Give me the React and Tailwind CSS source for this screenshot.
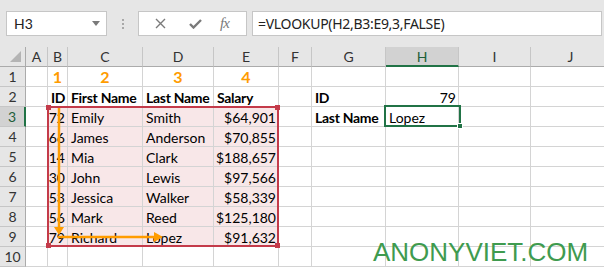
const cols = [
  { k: "A", w: "w-[22px]" },
  { k: "B", w: "w-[20px]" },
  { k: "C", w: "w-[75px]" },
  { k: "D", w: "w-[71px]" },
  { k: "E", w: "w-[65px]" },
  { k: "F", w: "w-[33px]" },
  { k: "G", w: "w-[74px]" },
  { k: "H", w: "w-[73px]" },
  { k: "I", w: "w-[72px]" },
  { k: "J", w: "w-[80px]" },
];

const people = [
  ["72", "Emily", "Smith", "$64,901"],
  ["66", "James", "Anderson", "$70,855"],
  ["14", "Mia", "Clark", "$188,657"],
  ["30", "John", "Lewis", "$97,566"],
  ["53", "Jessica", "Walker", "$58,339"],
  ["56", "Mark", "Reed", "$125,180"],
  ["79", "Richard", "Lopez", "$91,632"],
];

// cell content per row: { colKey: { v, bold, align, orange } }
const buildRows = () => {
  const rows = [];
  rows.push({
    B: { v: "1", orange: true },
    C: { v: "2", orange: true },
    D: { v: "3", orange: true },
    E: { v: "4", orange: true },
  });
  rows.push({
    B: { v: "ID", bold: true },
    C: { v: "First Name", bold: true },
    D: { v: "Last Name", bold: true },
    E: { v: "Salary", bold: true },
    G: { v: "ID", bold: true },
    H: { v: "79", align: "right" },
  });
  people.forEach((p, i) => {
    const r = {
      B: { v: p[0], align: "right", pink: true },
      C: { v: p[1], pink: true },
      D: { v: p[2], pink: true },
      E: { v: p[3], align: "right", pink: true },
    };
    if (i === 0) {
      r.G = { v: "Last Name", bold: true };
      r.H = { v: "Lopez" };
    }
    rows.push(r);
  });
  rows.push({});
  return rows;
};

const Cell = ({ col, data }) => {
  const d = data || {};
  let justify = "justify-start pl-[3px]";
  if (d.align === "right") justify = "justify-end pr-[2px]";
  if (d.orange) justify = "justify-center";
  return (
    <div
      className={`${col.w} h-[20px] shrink-0 flex items-center pt-[1px] whitespace-nowrap border-r border-b border-[#d4d4d4] ${justify} ${d.pink ? "bg-[#f8e7e8]" : "bg-white"}`}
    >
      {d.v && (
        <span
          className={
            d.orange
              ? "text-[16px] font-bold text-[#ff9c00]"
              : `text-[14px] text-black ${d.bold ? "font-bold tracking-[-0.3px]" : ""}`
          }
        >
          {d.v}
        </span>
      )}
    </div>
  );
};

const Toolbar = () => (
  <div className="h-[47px] bg-[#e6e6e6] flex items-center">
    {/* Name box */}
    <div className="ml-[6px] w-[101px] h-[25px] bg-white border border-[#c6c6c6] flex items-center justify-between pl-[7px] pr-[6px]">
      <span className="text-[14px] text-[#222]">H3</span>
      <svg width="8" height="5" viewBox="0 0 8 5">
        <path d="M0 0 L8 0 L4 5 Z" fill="#7a7a7a" />
      </svg>
    </div>
    {/* grip dots */}
    <div className="ml-[15px] flex flex-col gap-[2px]">
      <div className="w-[2px] h-[2px] bg-[#a8a8a8]" />
      <div className="w-[2px] h-[2px] bg-[#a8a8a8]" />
      <div className="w-[2px] h-[2px] bg-[#a8a8a8]" />
    </div>
    {/* Cancel / enter / fx */}
    <div className="ml-[14px] w-[109px] h-[25px] bg-white border border-[#c6c6c6] flex items-center">
      <svg className="ml-[16px]" width="11" height="11" viewBox="0 0 11 11">
        <path d="M1 1 L10 10 M10 1 L1 10" stroke="#7a7a7a" strokeWidth="1.4" />
      </svg>
      <svg className="ml-[23px]" width="13" height="10" viewBox="0 0 13 10">
        <path d="M1 5 L4.5 8.5 L12 1" stroke="#7a7a7a" strokeWidth="2.4" fill="none" />
      </svg>
      <span className="ml-[18px] text-[15px] italic text-[#7a7a7a] font-['Liberation_Serif',serif] tracking-[-1px]">
        fx
      </span>
    </div>
    {/* Formula */}
    <div className="ml-[5px] mr-[2px] flex-1 h-[25px] bg-white border border-[#c6c6c6] flex items-center pl-[5px]">
      <span className="text-[14px] text-[#222] font-['Noto_Sans',sans-serif] tracking-[-0.3px]">
        =VLOOKUP(H2,B3:E9,3,FALSE)
      </span>
    </div>
  </div>
);

const App = () => {
  const rows = buildRows();
  return (
    <div className="w-[604px] h-[267px] overflow-hidden relative bg-white font-['Lato',sans-serif]">
      <Toolbar />

      {/* column headers */}
      <div className="flex h-[20px] bg-[#e6e6e6]">
        <div className="w-[26px] h-[20px] shrink-0 border-r border-b border-[#ababab] relative">
          <svg className="absolute right-[4px] bottom-[4px]" width="11" height="11" viewBox="0 0 11 11">
            <path d="M11 0 L11 11 L0 11 Z" fill="#b4b4b4" />
          </svg>
        </div>
        {cols.map((c) => (
          <div
            key={c.k}
            className={`${c.w} h-[20px] shrink-0 flex items-center justify-center text-[14px] border-r border-[#c6c6c6] ${
              c.k === "H"
                ? "bg-[#d2d2d2] border-b-2 border-b-[#217346] text-[#1e5e3a]"
                : "border-b border-b-[#ababab] text-[#333]"
            }`}
          >
            {c.k}
          </div>
        ))}
      </div>

      {/* rows */}
      {rows.map((r, i) => (
        <div key={i} className="flex">
          <div
            className={`w-[26px] h-[20px] shrink-0 flex items-center justify-center text-[14px] border-b border-[#c6c6c6] ${
              i === 2
                ? "bg-[#d2d2d2] border-r-2 border-r-[#217346] text-[#1e5e3a]"
                : "bg-[#e6e6e6] border-r border-r-[#ababab] text-[#333]"
            }`}
          >
            {i + 1}
          </div>
          {cols.map((c) => (
            <Cell key={c.k} col={c} data={r[c.k]} />
          ))}
        </div>
      ))}

      {/* lookup range highlight B3:E9 */}
      <div className="absolute left-[47px] top-[106px] w-[232px] h-[141px] border-2 border-[#c43b4a] pointer-events-none">
        <div className="absolute -left-[3px] -top-[3px] w-[5px] h-[5px] bg-[#c43b4a]" />
        <div className="absolute -right-[3px] -top-[3px] w-[5px] h-[5px] bg-[#c43b4a]" />
        <div className="absolute -left-[3px] -bottom-[3px] w-[5px] h-[5px] bg-[#c43b4a]" />
        <div className="absolute -right-[3px] -bottom-[3px] w-[5px] h-[5px] bg-[#c43b4a]" />
      </div>

      {/* orange arrows */}
      <svg className="absolute left-0 top-0 pointer-events-none" width="604" height="267" viewBox="0 0 604 267">
        <path d="M59 108 L59 228" stroke="#ff9c00" strokeWidth="2.5" />
        <path d="M54 227 L59 235 L64 227 Z" fill="#ff9c00" />
        <path d="M58 237 L155 237" stroke="#ff9c00" strokeWidth="2.5" />
        <path d="M154 232 L163 237 L154 242 Z" fill="#ff9c00" />
      </svg>

      {/* active cell H3 */}
      <div className="absolute left-[384px] top-[105px] w-[77px] h-[22px] border-2 border-[#217346] pointer-events-none">
        <div className="absolute -right-[4px] -bottom-[4px] w-[6px] h-[6px] bg-[#217346] border border-white" />
      </div>

      {/* watermark */}
      <div className="absolute left-[373px] top-[238px] text-[26px] leading-[28px] text-[#3f9b4f] font-['Liberation_Sans',sans-serif] whitespace-nowrap">
        ANONYVIET.COM
      </div>
    </div>
  );
};

export default App;
